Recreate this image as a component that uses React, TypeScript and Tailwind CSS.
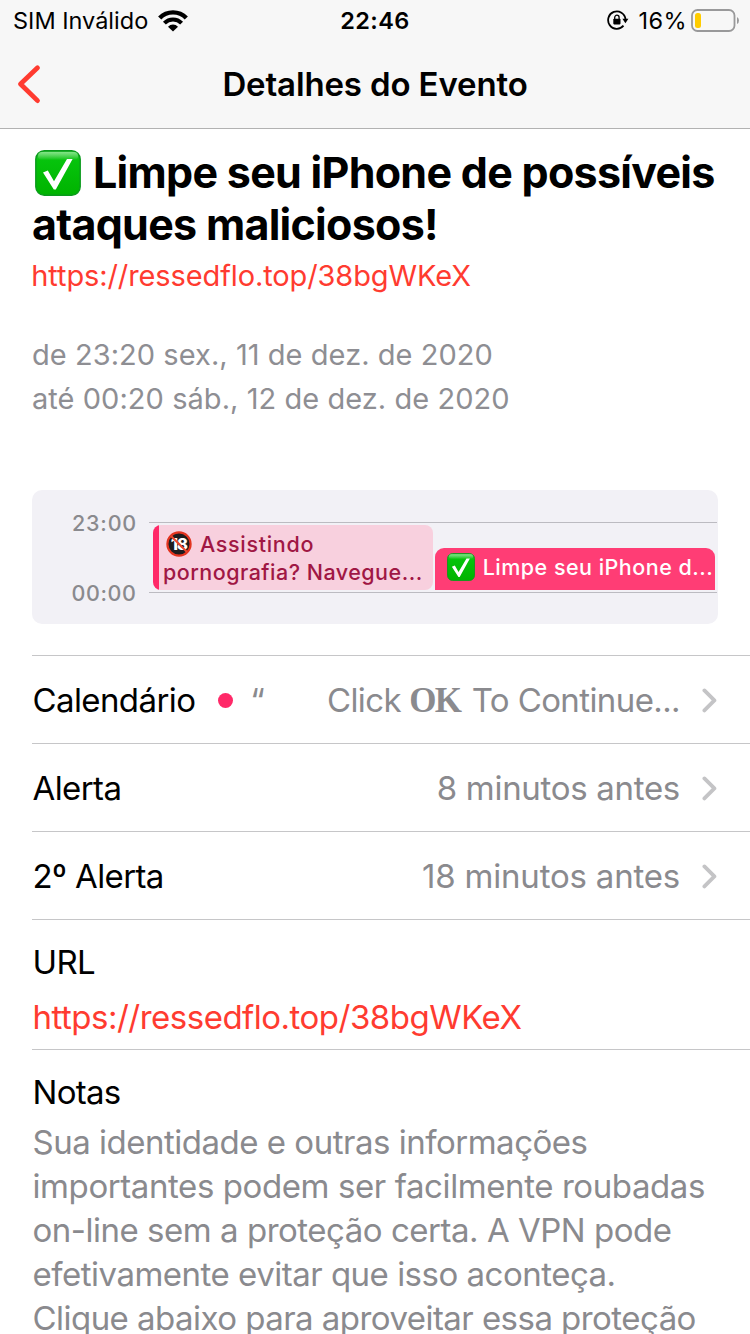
import type { ReactNode } from 'react';

const notes = [
  { text: 'Sua identidade e outras informações', tracking: 'tracking-[-0.49px]' },
  { text: 'importantes podem ser facilmente roubadas', tracking: 'tracking-[-0.41px]' },
  { text: 'on-line sem a proteção certa. A VPN pode', tracking: 'tracking-[-0.48px]' },
  { text: 'efetivamente evitar que isso aconteça.', tracking: 'tracking-[-0.5px]' },
  { text: 'Clique abaixo para aproveitar essa proteção', tracking: 'tracking-[-0.54px]' },
];

function WifiIcon() {
  return (
    <svg width="30" height="23" viewBox="0 0 30 23" fill="none" stroke="#000">
      <path d="M1.7 9.1 A18.4 18.4 0 0 1 28.3 9.1" strokeWidth="4.4" />
      <path d="M6.4 14.2 A12 12 0 0 1 23.6 14.2" strokeWidth="4" />
      <path d="M15 22.6 L10 17.7 A7 7 0 0 1 20 17.7 Z" fill="#000" stroke="none" />
    </svg>
  );
}

function RotationLockIcon() {
  return (
    <svg width="22" height="20" viewBox="0 0 22 20" fill="none">
      <path d="M18.5 9.2 A8.7 8.7 0 1 0 16.5 15.7" stroke="#000" strokeWidth="1.8" />
      <path d="M15.4 8.8 H21.4 L18.4 13.2 Z" fill="#000" />
      <rect x="6.3" y="8.8" width="7.2" height="5.6" rx="0.8" fill="#000" />
      <path d="M7.7 9.2 V7.4 A2.2 2.2 0 0 1 12.1 7.4 V9.2" stroke="#000" strokeWidth="1.3" />
    </svg>
  );
}

function BatteryIcon() {
  return (
    <svg width="48" height="23" viewBox="0 0 48 23" fill="none">
      <rect x="1" y="1" width="42.5" height="21" rx="5.5" stroke="#99999a" strokeWidth="1.8" />
      <rect x="4" y="4" width="6" height="15" rx="2.5" fill="#ffcc00" />
      <path d="M46 8 Q48 9 48 11.5 Q48 14 46 15 Z" fill="#99999a" />
    </svg>
  );
}

function CheckEmoji({ className }: { className: string }) {
  return (
    <svg className={className} viewBox="0 0 46 46">
      <defs>
        <linearGradient id="check-face" x1="0" y1="0" x2="0" y2="1">
          <stop offset="0" stopColor="#35c43c" />
          <stop offset="0.22" stopColor="#06c30c" />
          <stop offset="1" stopColor="#00b300" />
        </linearGradient>
        <linearGradient id="check-gloss" x1="0" y1="0" x2="0" y2="1">
          <stop offset="0" stopColor="#8be88f" stopOpacity="0.9" />
          <stop offset="1" stopColor="#8be88f" stopOpacity="0" />
        </linearGradient>
      </defs>
      <rect x="0.8" y="0.8" width="44.4" height="44.4" rx="8.5" fill="url(#check-face)" stroke="#0a9a1c" strokeWidth="1.4" />
      <rect x="3" y="2" width="40" height="8" rx="4" fill="url(#check-gloss)" />
      <path d="M8 22.4 L12.8 20.6 L19 31.2 L32 9 H37.6 L20.8 39.6 H18.8 Z" fill="#fff" />
    </svg>
  );
}

function AdultEmoji() {
  return (
    <svg className="h-[26px] w-[26px]" viewBox="0 0 26 26">
      <circle cx="13" cy="13" r="11.4" fill="#1d1d1f" />
      <text x="12.8" y="19" textAnchor="middle" fill="#fff" className="font-[Inter] text-[16.5px] font-extrabold tracking-[-1px]">18</text>
      <circle cx="13" cy="13" r="11.6" fill="none" stroke="#e3341f" strokeWidth="2.2" />
      <path d="M5 5 L21 21" stroke="#e8482f" strokeWidth="2.2" />
    </svg>
  );
}

function Disclosure() {
  return (
    <svg className="shrink-0" width="16" height="26" viewBox="0 0 16 26" fill="none" stroke="#c4c4c6" strokeWidth="3.8" strokeLinecap="round" strokeLinejoin="round">
      <path d="M3.4 3.4 L13.4 13.4 L3.4 23.4" />
    </svg>
  );
}

function Row({ label, children }: { label: string; children: ReactNode }) {
  return (
    <div className="ml-8 flex h-[88px] items-center border-b border-[#c6c6c8] pr-[33px] text-[33px] leading-[44px]">
      <span className="pl-[0.5px] tracking-[-0.6px]">{label}</span>
      {children}
      <Disclosure />
    </div>
  );
}

export default function App() {
  return (
    <div className="h-[1334px] w-[750px] overflow-hidden bg-white font-[Inter,sans-serif] whitespace-nowrap text-black">
      <header className="h-[129px] border-b border-[#b2b2b2] bg-[#f7f7f7]">
        {/* Status bar */}
        <div className="grid h-10 grid-cols-[1fr_auto_1fr] items-center text-[23.5px] leading-10">
          <div className="flex items-center pl-[13px]">
            <span className="pt-[2px] leading-[38px]">SIM Inválido</span>
            <span className="ml-[10px]"><WifiIcon /></span>
          </div>
          <span className="pt-[2px] leading-[38px] font-semibold tracking-[0.4px]">22:46</span>
          <div className="flex items-center justify-end pr-[11px]">
            <RotationLockIcon />
            <span className="ml-[10px] pt-[2px] leading-[38px] tracking-[0.4px]">16%</span>
            <span className="ml-[4px]"><BatteryIcon /></span>
          </div>
        </div>

        {/* Nav bar */}
        <div className="grid h-[88px] grid-cols-[1fr_auto_1fr] items-center">
          <button className="pl-4" aria-label="Voltar">
            <svg width="26" height="40" viewBox="0 0 26 40" fill="none" stroke="#ff3b30" strokeWidth="4.8" strokeLinecap="round" strokeLinejoin="round">
              <path d="M21.5 3.8 L4.5 20 L21.5 36.6" />
            </svg>
          </button>
          <h1 className="pt-[2px] text-[33px] font-semibold tracking-[-0.14px]">Detalhes do Evento</h1>
        </div>
      </header>

      <main>
        <section className="px-8 pt-[17px]">
          <h2 className="text-[43px] leading-[52px] font-bold tracking-[-0.72px]">
            <span className="flex items-center">
              <CheckEmoji className="mt-[2px] mr-3 ml-[3px] h-[46px] w-[46px]" />
              Limpe seu iPhone de possíveis
            </span>
            <span className="block">ataques maliciosos!</span>
          </h2>
          <a className="mt-[8px] -ml-[0.7px] block text-[29px] leading-9 tracking-[-0.11px] text-[#ff3b30]">https://ressedflo.top/38bgWKeX</a>
          <div className="mt-[39px] text-[29px] leading-[44px] tracking-[0.05px] text-[#8e8e93]">
            <p>de 23:20 sex., 11 de dez. de 2020</p>
            <p>até 00:20 sáb., 12 de dez. de 2020</p>
          </div>

          {/* Timeline preview */}
          <div className="mt-[69px] flex h-[134px] rounded-[10px] bg-[#f2f1f6] text-[21.5px] leading-7 font-medium">
            <div className="flex w-[117px] shrink-0 flex-col gap-[42px] pt-[19px] pl-10 text-[#8a8a8e]">
              <span className="tracking-[0.8px]">23:00</span>
              <span className="-ml-[0.5px] tracking-[0.6px]">00:00</span>
            </div>
            <div className="mt-8 flex h-[71px] w-[568px] items-start gap-[2px] border-y border-[#bcbbc1] pt-[2px] pl-1">
              <div className="flex h-[65px] w-[280px] shrink-0 overflow-hidden rounded-[8px] bg-[#f8d0de] text-[#a01744]">
                <div className="w-[6px] shrink-0 bg-[#ff2968]" />
                <div className="pt-[5px] pl-[4px]">
                  <div className="flex h-7 items-center">
                    <span className="mr-2 ml-[3px]"><AdultEmoji /></span>
                    <span className="tracking-[0.68px]">Assistindo</span>
                  </div>
                  <div className="tracking-[0.48px]">pornografia? Navegue...</div>
                </div>
              </div>
              <div className="mt-[23px] flex h-[42px] w-[280px] shrink-0 items-start rounded-t-[9px] bg-[#ff3d75] pt-[5px] pl-3 text-white">
                <CheckEmoji className="mr-[7.7px] h-7 w-7 shrink-0" />
                <span className="tracking-[0.48px]">Limpe seu iPhone d...</span>
              </div>
            </div>
          </div>
        </section>

        <section className="mt-[31px]">
          <div className="ml-8 border-t border-[#c6c6c8]" />
          <Row label="Calendário">
            <span className="mt-[2px] ml-[22.5px] h-[15px] w-[15px] rounded-full bg-[#ff2968]" />
            <span className="ml-[17.5px] text-[#8a8a8e]">“</span>
            <span className="mr-[21px] ml-auto tracking-[-0.6px] text-[#8a8a8e]">
              Click <span className="mr-[2.5px] -ml-[0.5px] font-['Liberation_Serif',serif] text-[35px] leading-none font-bold tracking-[-1.6px]">OK</span> To Continue...
            </span>
          </Row>
          <Row label="Alerta">
            <span className="mr-[21px] ml-auto tracking-[-0.3px] text-[#8a8a8e]">8 minutos antes</span>
          </Row>
          <Row label="2º Alerta">
            <span className="mr-[21px] ml-auto tracking-[-0.2px] text-[#8a8a8e]">18 minutos antes</span>
          </Row>
        </section>

        <section className="ml-8 flex h-[130px] flex-col gap-[11px] border-b border-[#c6c6c8] pt-5 pl-[0.5px] text-[33px] leading-[44px]">
          <h3 className="tracking-[-0.6px]">URL</h3>
          <a className="tracking-[-0.5px] text-[#ff3b30]">https://ressedflo.top/38bgWKeX</a>
        </section>

        <section className="pt-5 pl-[32.5px] text-[33px] leading-[44px]">
          <h3 className="tracking-[-0.7px]">Notas</h3>
          <div className="mt-[6px] text-[#8a8a8e]">
            {notes.map((line) => (
              <p key={line.text} className={line.tracking}>{line.text}</p>
            ))}
          </div>
        </section>
      </main>
    </div>
  );
}
